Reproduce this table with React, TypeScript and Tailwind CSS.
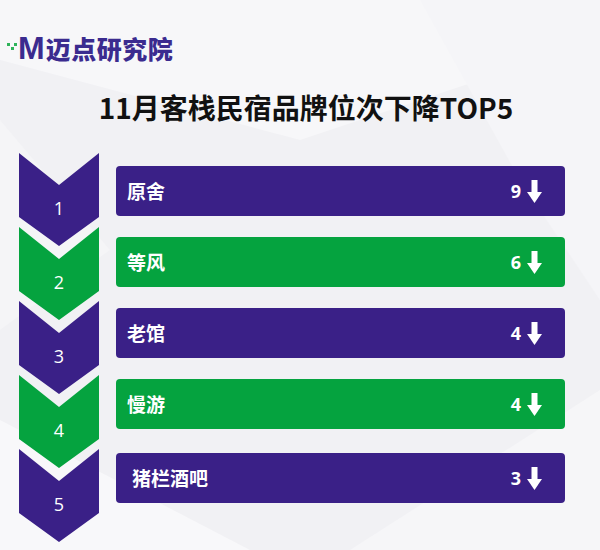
const rows = [
  { rank: 1, name: "原舍", drop: 9, color: "purple" },
  { rank: 2, name: "等风", drop: 6, color: "green" },
  { rank: 3, name: "老馆", drop: 4, color: "purple" },
  { rank: 4, name: "慢游", drop: 4, color: "green" },
  { rank: 5, name: "猪栏酒吧", drop: 3, color: "purple" },
];

const Chevron = ({ rank, color }: { rank: number; color: string }) => (
  <div className="relative w-[80px] h-[93px] -mb-[19px]">
    <svg width="80" height="93" viewBox="0 0 80 93" className="block">
      <polygon
        points="0,0 40,32 80,0 80,64 40,93 0,64"
        fill={color === "green" ? "#05a33f" : "#3a2087"}
      />
    </svg>
    <span className="absolute left-0 right-0 top-[43px] text-center text-white text-[18px] leading-6 font-['Open_Sans',sans-serif]">
      {rank}
    </span>
  </div>
);

const DownArrow = () => (
  <svg width="15" height="23" viewBox="0 0 15 23" fill="white">
    <rect x="4.5" y="0" width="6" height="13" />
    <polygon points="0,12 15,12 7.5,23" />
  </svg>
);

const App = () => {
  return (
    <div className="relative w-[600px] h-[550px] overflow-hidden bg-[#f1f1f4] font-['Noto_Sans_CJK_SC',sans-serif]">
      {/* faint low-poly background */}
      <svg className="absolute inset-0" width="600" height="550" viewBox="0 0 600 550">
        <polygon points="0,0 600,0 600,40 300,140 0,60" fill="#f7f7f9" />
        <polygon points="420,0 600,0 600,300 520,180" fill="#f5f5f8" />
        <polygon points="0,420 250,550 0,550" fill="#f8f8fa" />
        <polygon points="350,550 600,390 600,550" fill="#f6f6f8" />
        <polygon points="0,120 110,250 0,330" fill="#f5f5f7" />
      </svg>

      <div className="relative flex flex-col">
        {/* logo */}
        <div className="flex items-center h-[26px] mt-[35px] ml-[7px]">
          <div className="grid grid-cols-3 gap-[1px] w-[10px] mr-[1px] mt-[-4px]">
            <span className="w-[3px] h-[3px] bg-[#2fb35a]" />
            <span className="w-[3px] h-[3px]" />
            <span className="w-[3px] h-[3px] bg-[#2fb35a]" />
            <span className="w-[3px] h-[3px]" />
            <span className="w-[3px] h-[3px] bg-[#2fb35a]" />
            <span className="w-[3px] h-[3px]" />
          </div>
          <span className="text-[32px] leading-none font-black text-[#3b2b8f] font-['Liberation_Sans',sans-serif] tracking-[-1px]">
            M
          </span>
          <span className="ml-[2px] text-[25px] leading-none font-black text-[#3b2b8f] tracking-[0.5px]">
            迈点研究院
          </span>
        </div>

        {/* title */}
        <h1 className="mt-[27px] ml-[12px] text-center text-[28px] leading-[38px] font-bold text-[#111]">
          11月客栈民宿品牌位次下降TOP5
        </h1>

        <div className="flex mt-[27px] ml-[19px]">
          {/* chevrons */}
          <div className="flex flex-col w-[80px]">
            {rows.map((r) => (
              <Chevron key={r.rank} rank={r.rank} color={r.color} />
            ))}
          </div>

          {/* bars */}
          <div className="flex flex-col gap-[21px] ml-[17px] mt-[13px] w-[449px]">
            {rows.map((r) => (
              <div
                key={r.rank}
                className={`flex items-center justify-between h-[50px] rounded-[4px] pl-[11px] pr-[23px] ${
                  r.color === "green" ? "bg-[#05a33f]" : "bg-[#3a2087]"
                } ${r.rank === 5 ? "mt-[3px] pl-[16px]" : ""}`}
              >
                <span className="text-white text-[19px] font-bold">{r.name}</span>
                <div className="flex items-center gap-[6px]">
                  <span className="text-white text-[18px] font-bold font-['Open_Sans',sans-serif]">
                    {r.drop}
                  </span>
                  <DownArrow />
                </div>
              </div>
            ))}
          </div>
        </div>
      </div>
    </div>
  );
};

export default App;
